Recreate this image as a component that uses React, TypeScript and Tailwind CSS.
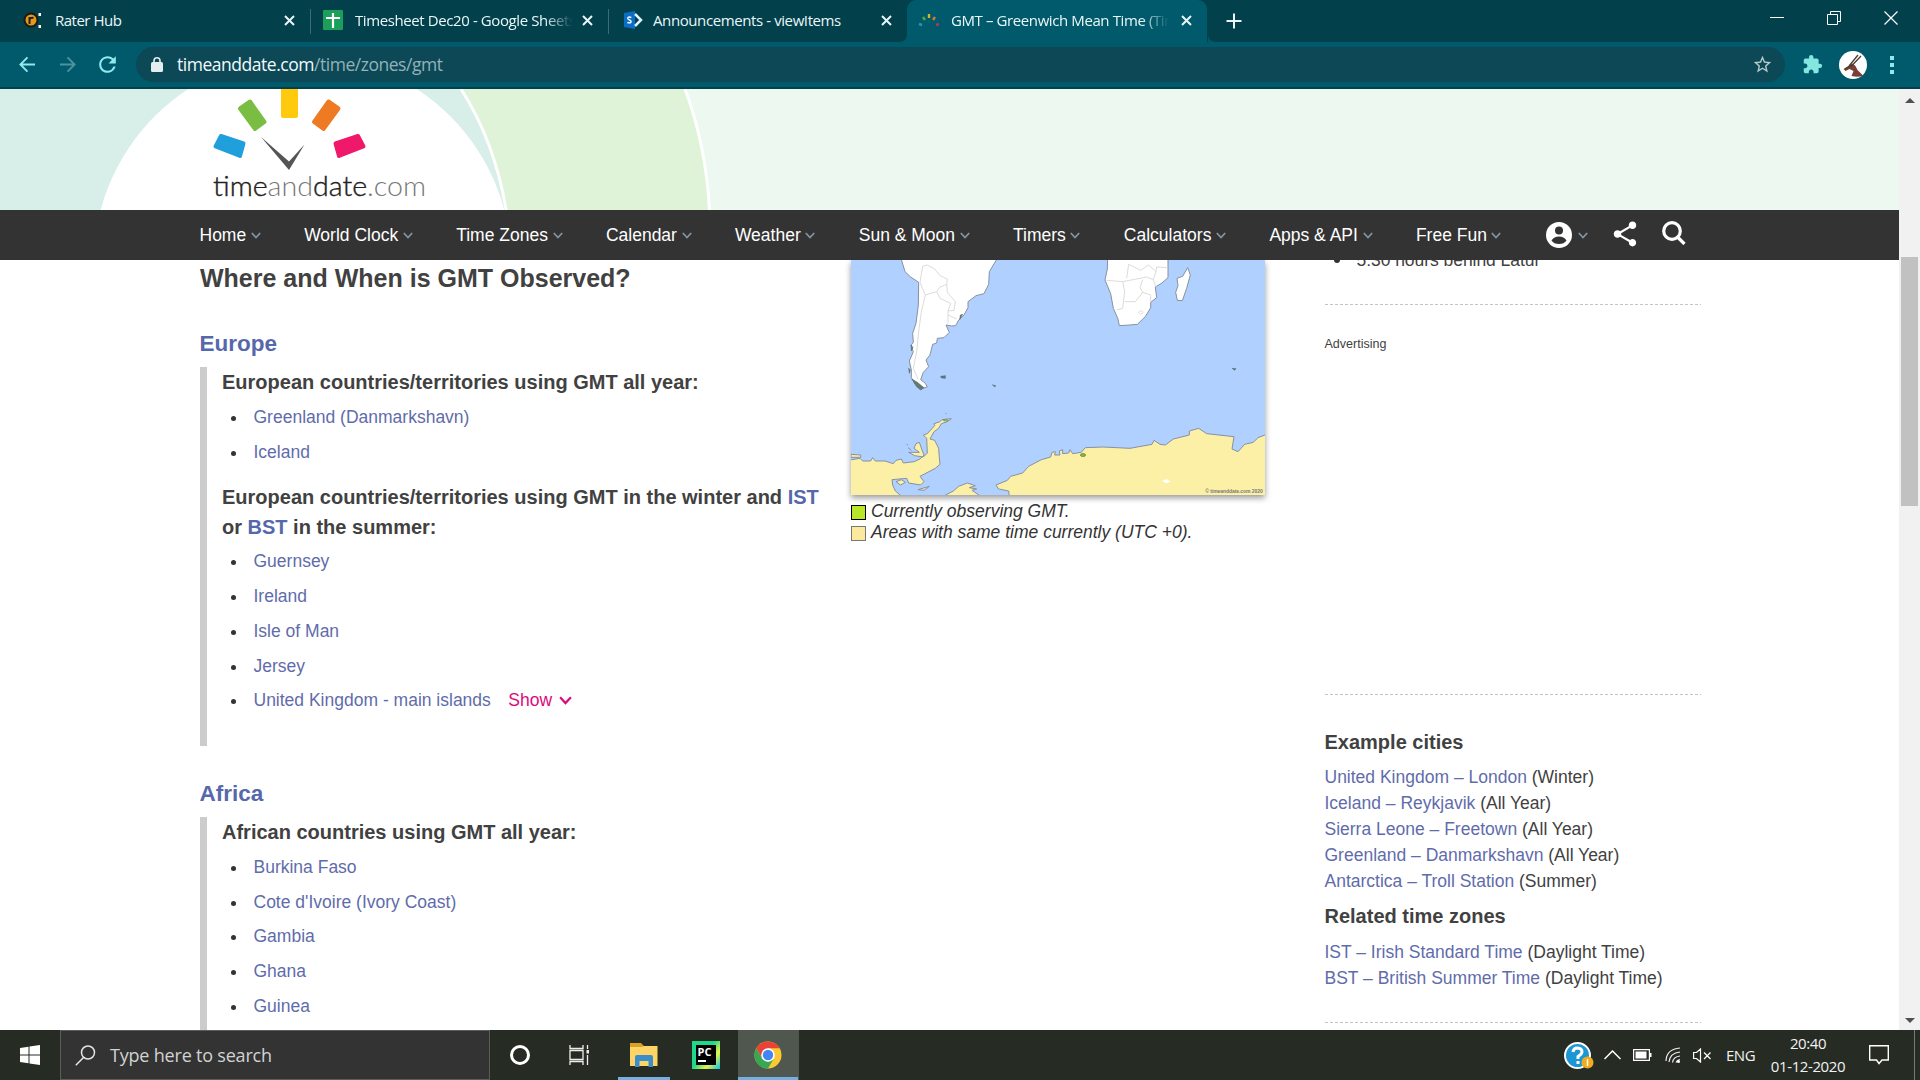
import React from "react";
import { MdOutlineStarBorder, MdExtension, MdShare, MdRefresh } from "react-icons/md";

type TabProps = { icon: React.ReactNode; title: string; active?: boolean; width: string; spacing: string; fade?: boolean };

const CloseX = () => (
  <svg className="h-[11px] w-[11px] shrink-0" viewBox="0 0 11 11" fill="none" stroke="#e8f6f8" strokeWidth="2">
    <path d="M1 1l9 9M10 1l-9 9" />
  </svg>
);

const Tab = ({ icon, title, active, width, spacing, fade }: TabProps) => (
  <div className={`relative flex h-[42px] shrink-0 items-center pb-[2px] ${width} ${active ? "rounded-t-[9px] bg-[#005a6b]" : ""}`}>
    {active && (
      <svg className="absolute -left-[8px] bottom-0 h-2 w-[317px]" viewBox="0 0 317 8" fill="#005a6b">
        <path d="M0 8Q8 8 8 0V8zM317 8Q309 8 309 0V8z" />
      </svg>
    )}
    <div className="flex w-[44px] items-center justify-center">{icon}</div>
    <div
      className={`w-[218px] overflow-hidden text-[15px] leading-[22px] whitespace-nowrap text-[#eaf7f8] ${spacing} ${
        fade ? "[mask-image:linear-gradient(to_right,black_87%,transparent)]" : ""
      }`}
    >
      {title}
    </div>
    <div className="mr-[15px] ml-auto">
      <CloseX />
    </div>
  </div>
);

const Dial = () => (
  <svg className="h-[16px] w-[22px]" viewBox="0 0 22 16" strokeWidth="2.400" fill="none">
    <path d="M1 12l3 1" stroke="#2e93b0" />
    <path d="M5 5l2 3" stroke="#5fa04a" />
    <path d="M11 2v4" stroke="#d9b425" />
    <path d="M17 5l-2 3" stroke="#cf7a35" />
    <path d="M21 12l-3 1" stroke="#ad3a5c" />
  </svg>
);

const TabStrip = () => (
  <div className="flex h-[42px] bg-[#02404c]">
    <div className="w-[11px]" />
    <Tab
      width="w-[299px]"
      spacing="tracking-[-0.5px]"
      title="Rater Hub"
      icon={
        <svg className="h-[18px] w-[20px]" viewBox="0 0 20 18">
          <circle cx="8" cy="9" r="6.500" fill="#e5981c" stroke="#161b14" strokeWidth="2" />
          <path d="M6.500 13V6M6.500 8.500Q8 6 10.500 7" stroke="#222" strokeWidth="2" fill="none" />
          <path d="M15.500 2h2.500v3h-2.500zM15.500 14h2.500v3h-2.500z" fill="#fff" />
        </svg>
      }
    />
    <div className="mt-[9px] h-[25px] w-px bg-[#3c6b75]" />
    <Tab
      width="w-[297px]"
      spacing="tracking-[-0.4px]"
      fade
      title="Timesheet Dec20 - Google Sheets"
      icon={
        <svg className="h-[20px] w-[20px]" viewBox="0 0 20 20">
          <rect width="20" height="20" rx="1" fill="#1c9f5a" />
          <path d="M10 3v15M3 8h14" stroke="#fff" strokeWidth="2.200" />
        </svg>
      }
    />
    <div className="mt-[9px] h-[25px] w-px bg-[#3c6b75]" />
    <Tab
      width="w-[298px]"
      spacing="tracking-[-0.4px]"
      title="Announcements - viewItems"
      icon={
        <svg className="ml-[4px] h-[20px] w-[19px]" viewBox="0 0 19 18">
          <path d="M0 2L11 0V18L0 16z" fill="#0a6fc4" />
          <path d="M11 3l6 6-6 6" fill="none" stroke="#dff0ff" strokeWidth="2.500" />
          <path d="M7.300 6.500Q3.600 5.300 3.700 7.400Q4 8.600 5.600 9Q7.400 9.700 7 11.200Q6 12.400 3.400 11.500" fill="none" stroke="#fff" strokeWidth="1.400" />
        </svg>
      }
    />
    <Tab
      active
      width="w-[300px]"
      spacing="tracking-[-0.4px]"
      fade
      title="GMT – Greenwich Mean Time (Time Zone)"
      icon={<Dial />}
    />
    <svg className="mt-[13px] ml-[19px] h-[16px] w-[16px]" viewBox="0 0 16 16" stroke="#eaf7f8" strokeWidth="2">
      <path d="M8 0.500v15M0.500 8h15" />
    </svg>
    <div className="ml-auto flex h-[36px] items-center gap-[43px] pr-[22px]">
      <svg className="h-[14px] w-[14px]" viewBox="0 0 14 14" stroke="#fff">
        <path d="M0 6.500h14" />
      </svg>
      <svg className="h-[14px] w-[14px]" viewBox="0 0 14 14" stroke="#fff" fill="none">
        <path d="M.5 3.500h10v10h-10zM3.500 3.500v-3h10v10h-3" />
      </svg>
      <svg className="h-[14px] w-[14px]" viewBox="0 0 14 14" stroke="#fff" strokeWidth="1.200">
        <path d="M.5.500l13 13M13.500.500l-13 13" />
      </svg>
    </div>
  </div>
);

const Arrow = ({ className }: { className: string }) => (
  <svg className={className} viewBox="0 0 18 18" fill="none" stroke="currentColor" strokeWidth="2">
    <path d="M17.500 9H2M9.500 1.500L2 9l7.500 7.500" />
  </svg>
);

const Toolbar = () => (
  <div className="flex h-[47px] items-center border-b-2 border-[#02404c] bg-[#005a6b]">
    <Arrow className="ml-[18px] h-[17px] w-[18px] text-[#8fe9ee]" />
    <Arrow className="ml-[23px] h-[17px] w-[18px] rotate-180 text-[#4c939e]" />
    <MdRefresh className="ml-[18px] h-[25px] w-[25px] text-[#8fe9ee]" />
    <div className="ml-[16px] flex h-[35px] w-[1649px] items-center rounded-full bg-[#0c4856]">
      <svg className="ml-[15px] h-[15px] w-[12px]" viewBox="0 0 12 15" fill="#e4edef">
        <rect y="5" width="12" height="10" rx="1.500" />
        <path d="M3 6V3.800a3 3 0 0 1 6 0V6" fill="none" stroke="#e4edef" strokeWidth="1.600" />
      </svg>
      <span className="mb-[1px] ml-[14px] text-[17.5px] leading-[26px] tracking-[-0.47px] text-[#f2fbfc]">
        timeanddate.com<span className="text-[#93b2b9]">/time/zones/gmt</span>
      </span>
      <MdOutlineStarBorder className="mr-[12px] ml-auto h-[21px] w-[21px] text-[#b7c9cd]" />
    </div>
    <MdExtension className="ml-[17px] h-[21px] w-[21px] text-[#83e6e0]" />
    <svg className="ml-[16px] h-[28px] w-[28px]" viewBox="0 0 28 28">
      <circle cx="14" cy="14" r="14" fill="#fff" />
      <path d="M4.500 18l9-5.500 3 2.500 2 4 6 6q-6 1.500-12 0l2-5-4-2-4 2z" fill="#7a4038" />
      <path d="M10 15L19 4M12 15.500L22 5M6 18l7-4" stroke="#4b3c31" strokeWidth="1.300" />
    </svg>
    <div className="ml-[23px] flex flex-col gap-[3px]">
      <i className="block h-[4px] w-[4px] bg-[#8fe9ee]" />
      <i className="block h-[4px] w-[4px] bg-[#8fe9ee]" />
      <i className="block h-[4px] w-[4px] bg-[#8fe9ee]" />
    </div>
  </div>
);

const Banner = () => (
  <svg className="block h-[121px] w-[1899px]" viewBox="0 89 1899 121">
    <rect y="89" width="1899" height="121" fill="#ecf8f0" />
    <path d="M0 89H685Q706 145 709.500 210H0z" fill="#def3d8" />
    <path d="M685 89Q706 145 709.500 210" fill="none" stroke="#fff" strokeWidth="3" />
    <path d="M0 89H461Q495 142 506.500 212H0z" fill="#d8eee9" />
    <path d="M461 89Q495 142 506.500 212" fill="none" stroke="#fff" strokeWidth="3" />
    <circle cx="302.500" cy="264" r="209" fill="#fff" />
    <g strokeWidth="4" strokeLinejoin="round">
      <path d="M283 86h13v30h-13z" fill="#ffc90e" stroke="#ffc90e" />
      <path d="M240 108.500l10-7 14.500 20.500-9.500 7z" fill="#79bd43" stroke="#79bd43" />
      <path d="M338.500 108.500l-10-7-14.500 20.500 9.500 7z" fill="#ef7a24" stroke="#ef7a24" />
      <path d="M221 136l22.500 7.500-3.500 12.500-24.500-9.500z" fill="#1f9fdc" stroke="#1f9fdc" />
      <path d="M358 136l-22.500 7.500 3.500 12.500 24.500-9.500z" fill="#f0186a" stroke="#f0186a" />
    </g>
    <path d="M261 137l28 24.500 15.500-17-15.500 25.500z" fill="#555" />
    <text x="213" y="196" fontSize="27" textLength="213" lengthAdjust="spacingAndGlyphs" fontFamily="Lato, sans-serif" fontWeight="300" fill="#222" strokeWidth="0.400">
      <tspan stroke="#222">time</tspan>
      <tspan fill="#777">and</tspan>
      <tspan stroke="#222">date</tspan>
      <tspan fill="#777">.com</tspan>
    </text>
  </svg>
);

const MENU = ["Home", "World Clock", "Time Zones", "Calendar", "Weather", "Sun & Moon", "Timers", "Calculators", "Apps & API", "Free Fun"];

const Chevron = ({ className }: { className: string }) => (
  <svg className={className} viewBox="0 0 10 7" fill="none" stroke="currentColor" strokeWidth="1.700">
    <path d="M.8 1L5 5.500 9.200 1" />
  </svg>
);

const Nav = () => (
  <nav className="flex h-[50px] items-center bg-[#333] pl-[199.500px] text-[17.5px] text-white">
    {MENU.map((m) => (
      <div key={m} className="mr-[43.400px] flex items-center whitespace-nowrap">
        {m}
        <Chevron className="mt-[1px] ml-[4.600px] h-[7px] w-[10px] text-[#8296a8]" />
      </div>
    ))}
    <div className="ml-[1px] flex items-center">
      <svg className="h-[26px] w-[26px]" viewBox="0 0 26 26">
        <circle cx="13" cy="13" r="13" fill="#fff" />
        <circle cx="13" cy="8.500" r="4" fill="#333" />
        <path d="M5.500 18.500Q8 14.500 13 14.500T20.500 18.500Q18 22 13 22T5.500 18.500" fill="#333" />
      </svg>
      <Chevron className="ml-[6px] h-[7px] w-[10px] text-[#8296a8]" />
      <MdShare className="ml-[22px] h-[30px] w-[30px] -translate-y-[1px]" />
      <svg className="ml-[22px] h-[24px] w-[24px] -translate-y-[2px]" viewBox="0 0 24 24" fill="none" stroke="#fff" strokeWidth="3.200">
        <circle cx="10" cy="10" r="8.300" />
        <path d="M15.500 16l7 7" />
      </svg>
    </div>
  </nav>
);

const CountryList = ({ items }: { items: string[] }) => (
  <ul className="text-[17.5px] text-[#5f6cab]">
    {items.map((t) => (
      <li key={t} className="flex h-[34.750px] items-center">
        <span className="mt-[3px] mr-[17.500px] ml-[9px] h-[5px] w-[5px] rounded-full bg-[#333]" />
        {t}
        {t.startsWith("United") && (
          <span className="ml-[17.500px] flex items-center text-[#dd0a7c]">
            Show
            <Chevron className="ml-[7px] h-[9px] w-[13px]" />
          </span>
        )}
      </li>
    ))}
  </ul>
);

const Left = () => (
  <section className="w-[640px] shrink-0 text-[#414141]">
    <h2 className="mt-[3px] h-[30px] text-[25px] leading-[30px] font-bold">Where and When is GMT Observed?</h2>
    <h3 className="mt-[36px] -ml-[0.500px] h-[30px] text-[22.5px] leading-[30px] font-bold text-[#5668ab]">Europe</h3>
    <div className="mt-[8px] h-[379px] border-l-[7px] border-[#ccc] pl-[15px]">
      <h4 className="h-[32.500px] text-[20px] leading-[30px] font-bold">European countries/territories using GMT all year:</h4>
      <CountryList items={["Greenland (Danmarkshavn)", "Iceland"]} />
      <h4 className="mt-[13px] h-[62px] w-[605px] text-[20px] leading-[30px] font-bold">
        European countries/territories using GMT in the winter and <span className="text-[#5668ab]">IST</span> or{" "}
        <span className="text-[#5668ab]">BST</span> in the summer:
      </h4>
      <CountryList items={["Guernsey", "Ireland", "Isle of Man", "Jersey", "United Kingdom - main islands"]} />
    </div>
    <h3 className="mt-[33px] -ml-[0.500px] h-[30px] text-[22.5px] leading-[30px] font-bold text-[#5668ab]">Africa</h3>
    <div className="mt-[8px] h-[379px] border-l-[7px] border-[#ccc] pl-[15px]">
      <h4 className="h-[32.500px] text-[20px] leading-[30px] font-bold">African countries using GMT all year:</h4>
      <CountryList items={["Burkina Faso", "Cote d'Ivoire (Ivory Coast)", "Gambia", "Ghana", "Guinea"]} />
    </div>
  </section>
);

const MapPanel = () => (
  <section className="ml-[11px] w-[415px] shrink-0">
    <svg className="block h-[235px] w-[414px] shadow-[0_3px_6px_rgba(0,0,0,0.4)]" viewBox="33 15 1242 705" preserveAspectRatio="none">
      <rect x="33" y="15" width="1242" height="705" fill="#b0d0ff" />
      <g stroke="#8791a0" strokeWidth="3" strokeLinejoin="round">
        <path
          fill="#fff"
          d="M183 10L195 50 212 66 236 82 235 150 228 205 218 235 220 262 212 272 220 290 208 318 214 345 214 368 225 388 240 402 262 396 256 385 242 374 250 352 266 335 258 315 270 300 278 268 290 264 292 250 312 248 328 232 318 210 335 213 347 212 356 195 372 180 384 158 384 140 408 122 432 116 446 88 448 50 472 10z"
        />
        <path
          fill="#fff"
          d="M803 10L802 42 795 75 812 116 820 160 834 192 838 212 868 210 892 208 916 185 932 158 932 142 950 128 946 96 966 84 984 68 984 10z"
        />
        <path fill="#fff" d="M1043 38L1051 60 1040 100 1027 137 1012 136 1007 112 1014 92 1011 70 1028 64z" />
        <path
          fill="#fcefa6"
          d="M30 615L60 610 68 618 92 618 98 608 106 618 135 618 160 626 168 616 184 612 190 624 222 620 240 612 252 600 246 585 238 562 228 566 222 580 238 592 206 592 224 602 250 606 262 594 260 550 250 540 262 536 284 512 282 506 300 500 306 494 334 491 322 500 304 506 296 520 282 530 270 552 284 556 296 580 298 608 300 628 286 640 240 664 252 680 242 690 206 684 200 670 156 674 158 690 166 708 186 725 30 725z"
        />
        <path fill="#fcefa6" d="M308 725L340 708 356 694 382 684 406 692 388 698 410 702 396 706 424 725z" />
        <path
          fill="#fcefa6"
          d="M508 725L506 708 476 702 468 690 502 676 512 664 548 654 566 634 604 614 632 606 636 592 646 590 644 600 660 600 658 588 668 584 668 596 686 594 690 584 698 596 724 592 736 578 790 576 870 580 936 568 942 556 960 568 976 570 1000 552 1048 540 1048 528 1076 520 1100 536 1182 545 1176 582 1194 590 1214 568 1240 562 1254 548 1280 538V725z"
        />
        <path fill="#fcefa6" d="M33 598L62 600 62 607 33 607zM168 680l16-6 12 8-14 8zM234 704l34-10-16 12zM204 578l10 8M200 568l4 2M318 474v3" />
      </g>
      <g fill="none" stroke="#d4d4d4" strokeWidth="2.500">
        <path d="M240 82L256 120 244 170 236 230 230 290 220 340 234 372M256 120L290 110 300 96 320 88 322 72 300 62 284 42 262 30 248 34 240 82M290 110L300 130 332 145 324 168 342 166 346 140 322 112 320 88M324 168L324 206M324 180L350 192" />
        <path d="M800 76L848 80 900 70 920 66 940 74 948 96M848 80L854 110 848 160 830 165M854 140L886 140 908 112 900 98 908 74M908 112L932 120 932 142M866 28L902 46 926 30 948 50 940 74M860 70L866 28M948 50L950 36 984 38M896 172l8-6 6 6-8 6z" />
      </g>
      <g fill="#5f7a70" stroke="#53646c" strokeWidth="1.500">
        <path d="M302 364l14-2v8l-12-1zM457 389l11 4-5 2zM1176 340l12 1-4 5zM214 270l5 8-5 10zM206 340l5 5-3 10zM216 372l16 10 20 16-10 7-12-10zM368 178l-9 16 2-14z" />
      </g>
      <ellipse cx="729" cy="600" rx="8" ry="4.500" fill="#8cb83c" stroke="#66762d" strokeWidth="2" />
      <ellipse cx="317" cy="496" rx="8" ry="3" fill="#8cb878" stroke="#66762d" />
      <path d="M966 678l14-6 12 8-14 5z" fill="#fff" />
      <text x="1096" y="713" fontSize="15" fontFamily="Liberation Sans, sans-serif" fontWeight="700" fill="#77797c" textLength="172">
        © timeanddate.com 2020
      </text>
    </svg>
    <div className="mt-[6px] text-[17.5px] leading-[21px] whitespace-nowrap text-[#333] italic">
      <div className="flex h-[21px] items-center">
        <span className="mt-[2px] mr-[5px] h-[15px] w-[15px] border border-black bg-[#b9e629]" />
        Currently observing GMT.
      </div>
      <div className="flex h-[21px] items-center">
        <span className="mt-[2px] mr-[5px] h-[15px] w-[15px] border border-[#777] bg-[#fbe99d]" />
        Areas with same time currently (UTC +0).
      </div>
    </div>
  </section>
);

const CITIES = [
  ["United Kingdom – London", "(Winter)"],
  ["Iceland – Reykjavik", "(All Year)"],
  ["Sierra Leone – Freetown", "(All Year)"],
  ["Greenland – Danmarkshavn", "(All Year)"],
  ["Antarctica – Troll Station", "(Summer)"],
];
const ZONES = [
  ["IST – Irish Standard Time", "(Daylight Time)"],
  ["BST – British Summer Time", "(Daylight Time)"],
];

const Links = ({ rows }: { rows: string[][] }) => (
  <>
    {rows.map(([a, b]) => (
      <p key={a} className="h-[26px] leading-[26px] whitespace-nowrap">
        <span className="text-[#5f6cab]">{a}</span> {b}
      </p>
    ))}
  </>
);

const Dashes = () => (
  <div className="h-px bg-[repeating-linear-gradient(to_right,#c4c4c4_0_3px,transparent_3px_5px)]" />
);

const Sidebar = () => (
  <aside className="ml-[58.500px] w-[376px] shrink-0 text-[17.5px] text-[#414141]">
    <div className="-mt-[13px] flex h-[26px] items-center">
      <span className="mr-[17px] ml-[9px] h-[6px] w-[6px] rounded-full bg-[#333]" />
      <span className="tracking-[-0.050px]">5:30 hours behind Latur</span>
    </div>
    <div className="h-[31px]" />
    <Dashes />
    <p className="mt-[30px] h-[18px] text-[12.5px] leading-[18px]">Advertising</p>
    <div className="h-[341px]" />
    <Dashes />
    <h3 className="mt-[32px] h-[30px] text-[20px] leading-[30px] font-bold">Example cities</h3>
    <div className="h-[7px]" />
    <Links rows={CITIES} />
    <h3 className="mt-[7px] h-[30px] text-[20px] leading-[30px] font-bold">Related time zones</h3>
    <div className="h-[8px]" />
    <Links rows={ZONES} />
    <div className="h-[31px]" />
    <Dashes />
  </aside>
);

const Scrollbar = () => (
  <div className="flex w-[21px] flex-col items-center bg-[#f1f1f1]">
    <i className="mt-[9px] h-0 w-0 border-x-[5px] border-b-[5px] border-x-transparent border-b-[#505050]" />
    <div className="mt-[154px] h-[249px] w-[17px] bg-[#c1c1c1]" />
    <i className="mt-auto mb-[7px] h-0 w-0 border-x-[5px] border-t-[5px] border-x-transparent border-t-[#505050]" />
  </div>
);

const Taskbar = () => (
  <div className="flex h-[50px] bg-[#262c24] text-[#f2f2f2]">
    <div className="flex w-[60px] items-center justify-center">
      <svg className="h-[20px] w-[20px]" viewBox="0 0 20 20" fill="#fff">
        <path d="M0 3l8.500-1.300V9.500H0zM9.500 1.500L20 0v9.500H9.500zM0 10.500h8.500v7.800L0 17zM9.500 10.500H20V20L9.500 18.500z" />
      </svg>
    </div>
    <div className="flex w-[430px] items-center border border-[#5a5d58] bg-[#333]">
      <svg className="ml-[14px] h-[21px] w-[21px]" viewBox="0 0 21 21" fill="none" stroke="#e6e6e6" strokeWidth="1.500">
        <circle cx="13" cy="7.500" r="6.500" />
        <path d="M8.500 12.500L.8 20.200" />
      </svg>
      <span className="ml-[14px] text-[18px] tracking-[-0.2px] text-[#d2d2d2]">Type here to search</span>
    </div>
    <div className="flex w-[60px] items-center justify-center">
      <div className="h-[20px] w-[20px] rounded-full border-[3px] border-white" />
    </div>
    <div className="flex w-[59px] items-center justify-center">
      <svg className="h-[20px] w-[21px]" viewBox="0 0 21 20" fill="none" stroke="#eee" strokeWidth="1.300">
        <path d="M1 0v3.500h13V0M1 5.500h13v9H1zM1 20v-3.500h13V20M18.500 0v4M18.500 10v10" />
        <path d="M17.500 5h2.500v3.500h-2.500z" fill="#eee" stroke="none" />
      </svg>
    </div>
    <div className="ml-[9px] flex w-[52px] flex-col items-center">
      <svg className="mt-[13px] h-[24px] w-[28px]" viewBox="0 0 28 24">
        <path d="M0 0h11l3 3h12v4H0z" fill="#d9a021" />
        <path d="M0 4h12l2-1h13.500v20H0z" fill="#ffd467" />
        <path d="M5 24V14q0-2 2-2h14q2 0 2 2v10h-4.500v-6h-9v6z" fill="#3b8ec9" />
      </svg>
      <div className="mt-auto h-[3px] w-full bg-[#76b0e0]" />
    </div>
    <div className="flex w-[68px] items-center justify-center pl-[3px]">
      <div className="flex h-[28px] w-[28px] items-center justify-center bg-[linear-gradient(130deg,#21d789_45%,#e8f24a_70%,#07c3f2)]">
        <div className="flex h-[20px] w-[20px] flex-col bg-black pl-[2px] text-[11px] leading-[13px] font-bold text-white">
          <span>PC</span>
          <i className="mt-[2px] h-[2px] w-[8px] bg-white" />
        </div>
      </div>
    </div>
    <div className="flex w-[61px] flex-col items-center bg-[#50574e] pr-[1px]">
      <svg className="mt-[11px] h-[28px] w-[28px]" viewBox="0 0 28 28">
        <circle cx="14" cy="14" r="13.500" fill="#fcc934" />
        <path d="M2.300 7.250A13.500 13.500 0 0 1 25.700 7.250H14L8.150 17.400z" fill="#ea4335" />
        <path d="M2.300 7.250A13.500 13.500 0 0 0 14 27.500L19.850 17.400 14 20.700 8.150 17.400z" fill="#34a853" />
        <circle cx="14" cy="14" r="6.800" fill="#fff" />
        <circle cx="14" cy="14" r="5.200" fill="#4285f4" />
      </svg>
      <div className="mt-auto h-[3px] w-full bg-[#76b0e0]" />
    </div>
    <div className="ml-auto flex items-center">
      <svg className="mt-[2px] h-[28px] w-[30px]" viewBox="0 0 30 28">
        <circle cx="13.500" cy="13.500" r="12.500" fill="#1d97d4" stroke="#fff" strokeWidth="2" />
        <path d="M9 10Q9.500 6 13.500 6Q18 6.300 18 10Q17.500 12.500 14 14.500V17M14 19v3" fill="none" stroke="#fff" strokeWidth="3" />
        <circle cx="23.500" cy="20.500" r="6" fill="#f2ab1d" />
        <path d="M23.500 17v7" stroke="#fff" strokeWidth="1.500" />
      </svg>
      <svg className="ml-[10px] h-[10px] w-[17px]" viewBox="0 0 17 10" fill="none" stroke="#fff" strokeWidth="1.500">
        <path d="M.5 9l8-8 8 8" />
      </svg>
      <svg className="ml-[12px] h-[12px] w-[19px]" viewBox="0 0 19 12">
        <path d="M.6.600h15.800v10.800H.6z" fill="none" stroke="#fff" strokeWidth="1.200" />
        <path d="M2.500 2.500h11v7h-11zM17 4h1.500v4H17z" fill="#fff" />
      </svg>
      <svg className="ml-[13px] h-[16px] w-[16px]" viewBox="0 0 16 16" fill="none" stroke="#eee" strokeWidth="1.200">
        <path d="M1 14Q1.500 2 15 1M4 15Q5 6 15 5M7.500 15.500Q8.500 9.500 15 9M11 15.500Q12 13 15 12.500" />
        <circle cx="13.500" cy="14.500" r="1.500" fill="#fff" stroke="none" />
      </svg>
      <svg className="ml-[12px] h-[15px] w-[19px]" viewBox="0 0 19 15" fill="none" stroke="#fff" strokeWidth="1.200">
        <path d="M.6 4.500H3.500L7.500 1v13L3.500 10.500H.6zM11 4.500l6.500 6.500M17.500 4.500L11 11" />
      </svg>
      <span className="ml-[14px] w-[30px] text-[15px] tracking-[-0.5px]">ENG</span>
      <div className="ml-[13px] w-[78px] text-center text-[15px] leading-[23px] tracking-[-0.4px] whitespace-nowrap">
        <div>20:40</div>
        <div>01-12-2020</div>
      </div>
      <svg className="ml-[22px] h-[20px] w-[20px]" viewBox="0 0 20 20" fill="none" stroke="#fff" strokeWidth="1.400">
        <path d="M.7.700h18.600v14.300H13L10 18.500 7.500 15H.7z" />
      </svg>
      <div className="mr-[5px] ml-[25px] h-[50px] w-px bg-[#777b75]" />
    </div>
  </div>
);

export default function App() {
  return (
    <div className="flex h-[1080px] w-[1920px] flex-col overflow-hidden bg-white font-['Open_Sans','Noto_Sans',sans-serif]">
      <TabStrip />
      <Toolbar />
      <div className="flex h-[941px] overflow-hidden font-['Liberation_Sans',Arial,sans-serif]">
        <main className="flex h-[941px] w-[1899px] flex-col overflow-hidden">
          <Banner />
          <Nav />
          <div className="flex h-[770px] overflow-hidden pl-[200px]">
            <Left />
            <MapPanel />
            <Sidebar />
          </div>
        </main>
        <Scrollbar />
      </div>
      <Taskbar />
    </div>
  );
}
